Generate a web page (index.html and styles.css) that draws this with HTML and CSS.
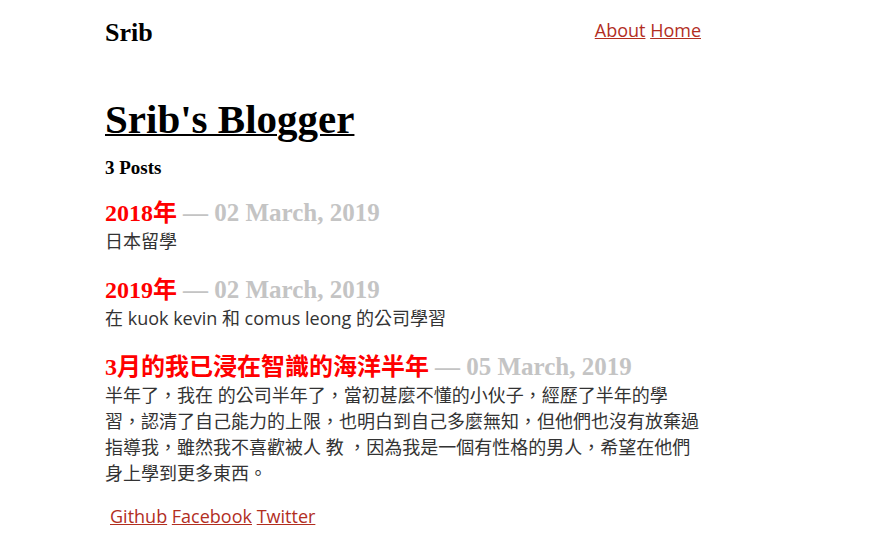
FILE: index.html
```html
<!DOCTYPE html>
<html lang="zh-Hant">
<head>
<meta charset="utf-8">
<title>Srib's Blogger</title>
<link rel="stylesheet" href="styles.css">
</head>
<body>
<div class="page">
  <header class="site-header">
    <div class="logo">Srib</div>
    <nav class="nav"><a href="#">About</a> <a href="#">Home</a></nav>
  </header>
  <main>
    <h1 class="blog-title"><a href="#">Srib's Blogger</a></h1>
    <div class="count">3 Posts</div>
    <article class="post">
      <h2 class="post-title"><span class="name">2018年</span> <span class="date">— 02 March, 2019</span></h2>
      <p class="excerpt">日本留學</p>
    </article>
    <article class="post">
      <h2 class="post-title"><span class="name">2019年</span> <span class="date">— 02 March, 2019</span></h2>
      <p class="excerpt">在 kuok kevin 和 comus leong 的公司學習</p>
    </article>
    <article class="post">
      <h2 class="post-title"><span class="name">3月的我已浸在智識的海洋半年</span> <span class="date">— 05 March, 2019</span></h2>
      <p class="excerpt">半年了，我在 的公司半年了，當初甚麼不懂的小伙子，經歷了半年的學習，認清了自己能力的上限，也明白到自己多麼無知，但他們也沒有放棄過指導我，雖然我不喜歡被人 教 ，因為我是一個有性格的男人，希望在他們身上學到更多東西。</p>
    </article>
  </main>
  <footer class="footer"><a href="#">Github</a> <a href="#">Facebook</a> <a href="#">Twitter</a></footer>
</div>
</body>
</html>
```
FILE: styles.css
```css
html, body {
  margin: 0;
  padding: 0;
  background: #fff;
}
body {
  font-family: "Open Sans", "Noto Sans CJK TC", sans-serif;
  color: #333;
  font-size: 18px;
}
.page {
  width: 596px;
  margin-left: 105px;
  padding-top: 18px;
}
.site-header {
  display: flex;
  justify-content: space-between;
  align-items: flex-start;
}
.logo {
  font-family: "Liberation Serif", "Noto Sans CJK TC", serif;
  font-weight: bold;
  font-size: 26px;
  color: #000;
  line-height: 30px;
}
.nav {
  font-size: 18px;
  line-height: 24px;
}
a {
  color: #b22e1f;
}
.blog-title {
  margin: 46px 0 0;
  font-family: "Liberation Serif", "Noto Sans CJK TC", serif;
  font-size: 41px;
  line-height: 50px;
  font-weight: bold;
}
.blog-title a {
  color: #000;
  text-decoration-thickness: 2px;
}
.count {
  margin-top: 12px;
  font-family: "Liberation Serif", "Noto Sans CJK TC", serif;
  font-weight: bold;
  font-size: 19px;
  color: #000;
  line-height: 24px;
}
.post-title {
  margin: 18px 0 0;
  font-size: 24px;
  line-height: 30px;
  font-weight: bold;
  font-family: "Liberation Serif", "Noto Sans CJK TC", serif;
}
.post + .post .post-title {
  margin-top: 21px;
}
.name {
  color: #ff0000;
}
.date {
  color: #c4c4c4;
  font-size: 25px;
}
.excerpt {
  margin: 0;
  line-height: 26px;
  color: #333;
}
.footer {
  margin-top: 17px;
  padding-left: 5px;
  line-height: 26px;
}
```
